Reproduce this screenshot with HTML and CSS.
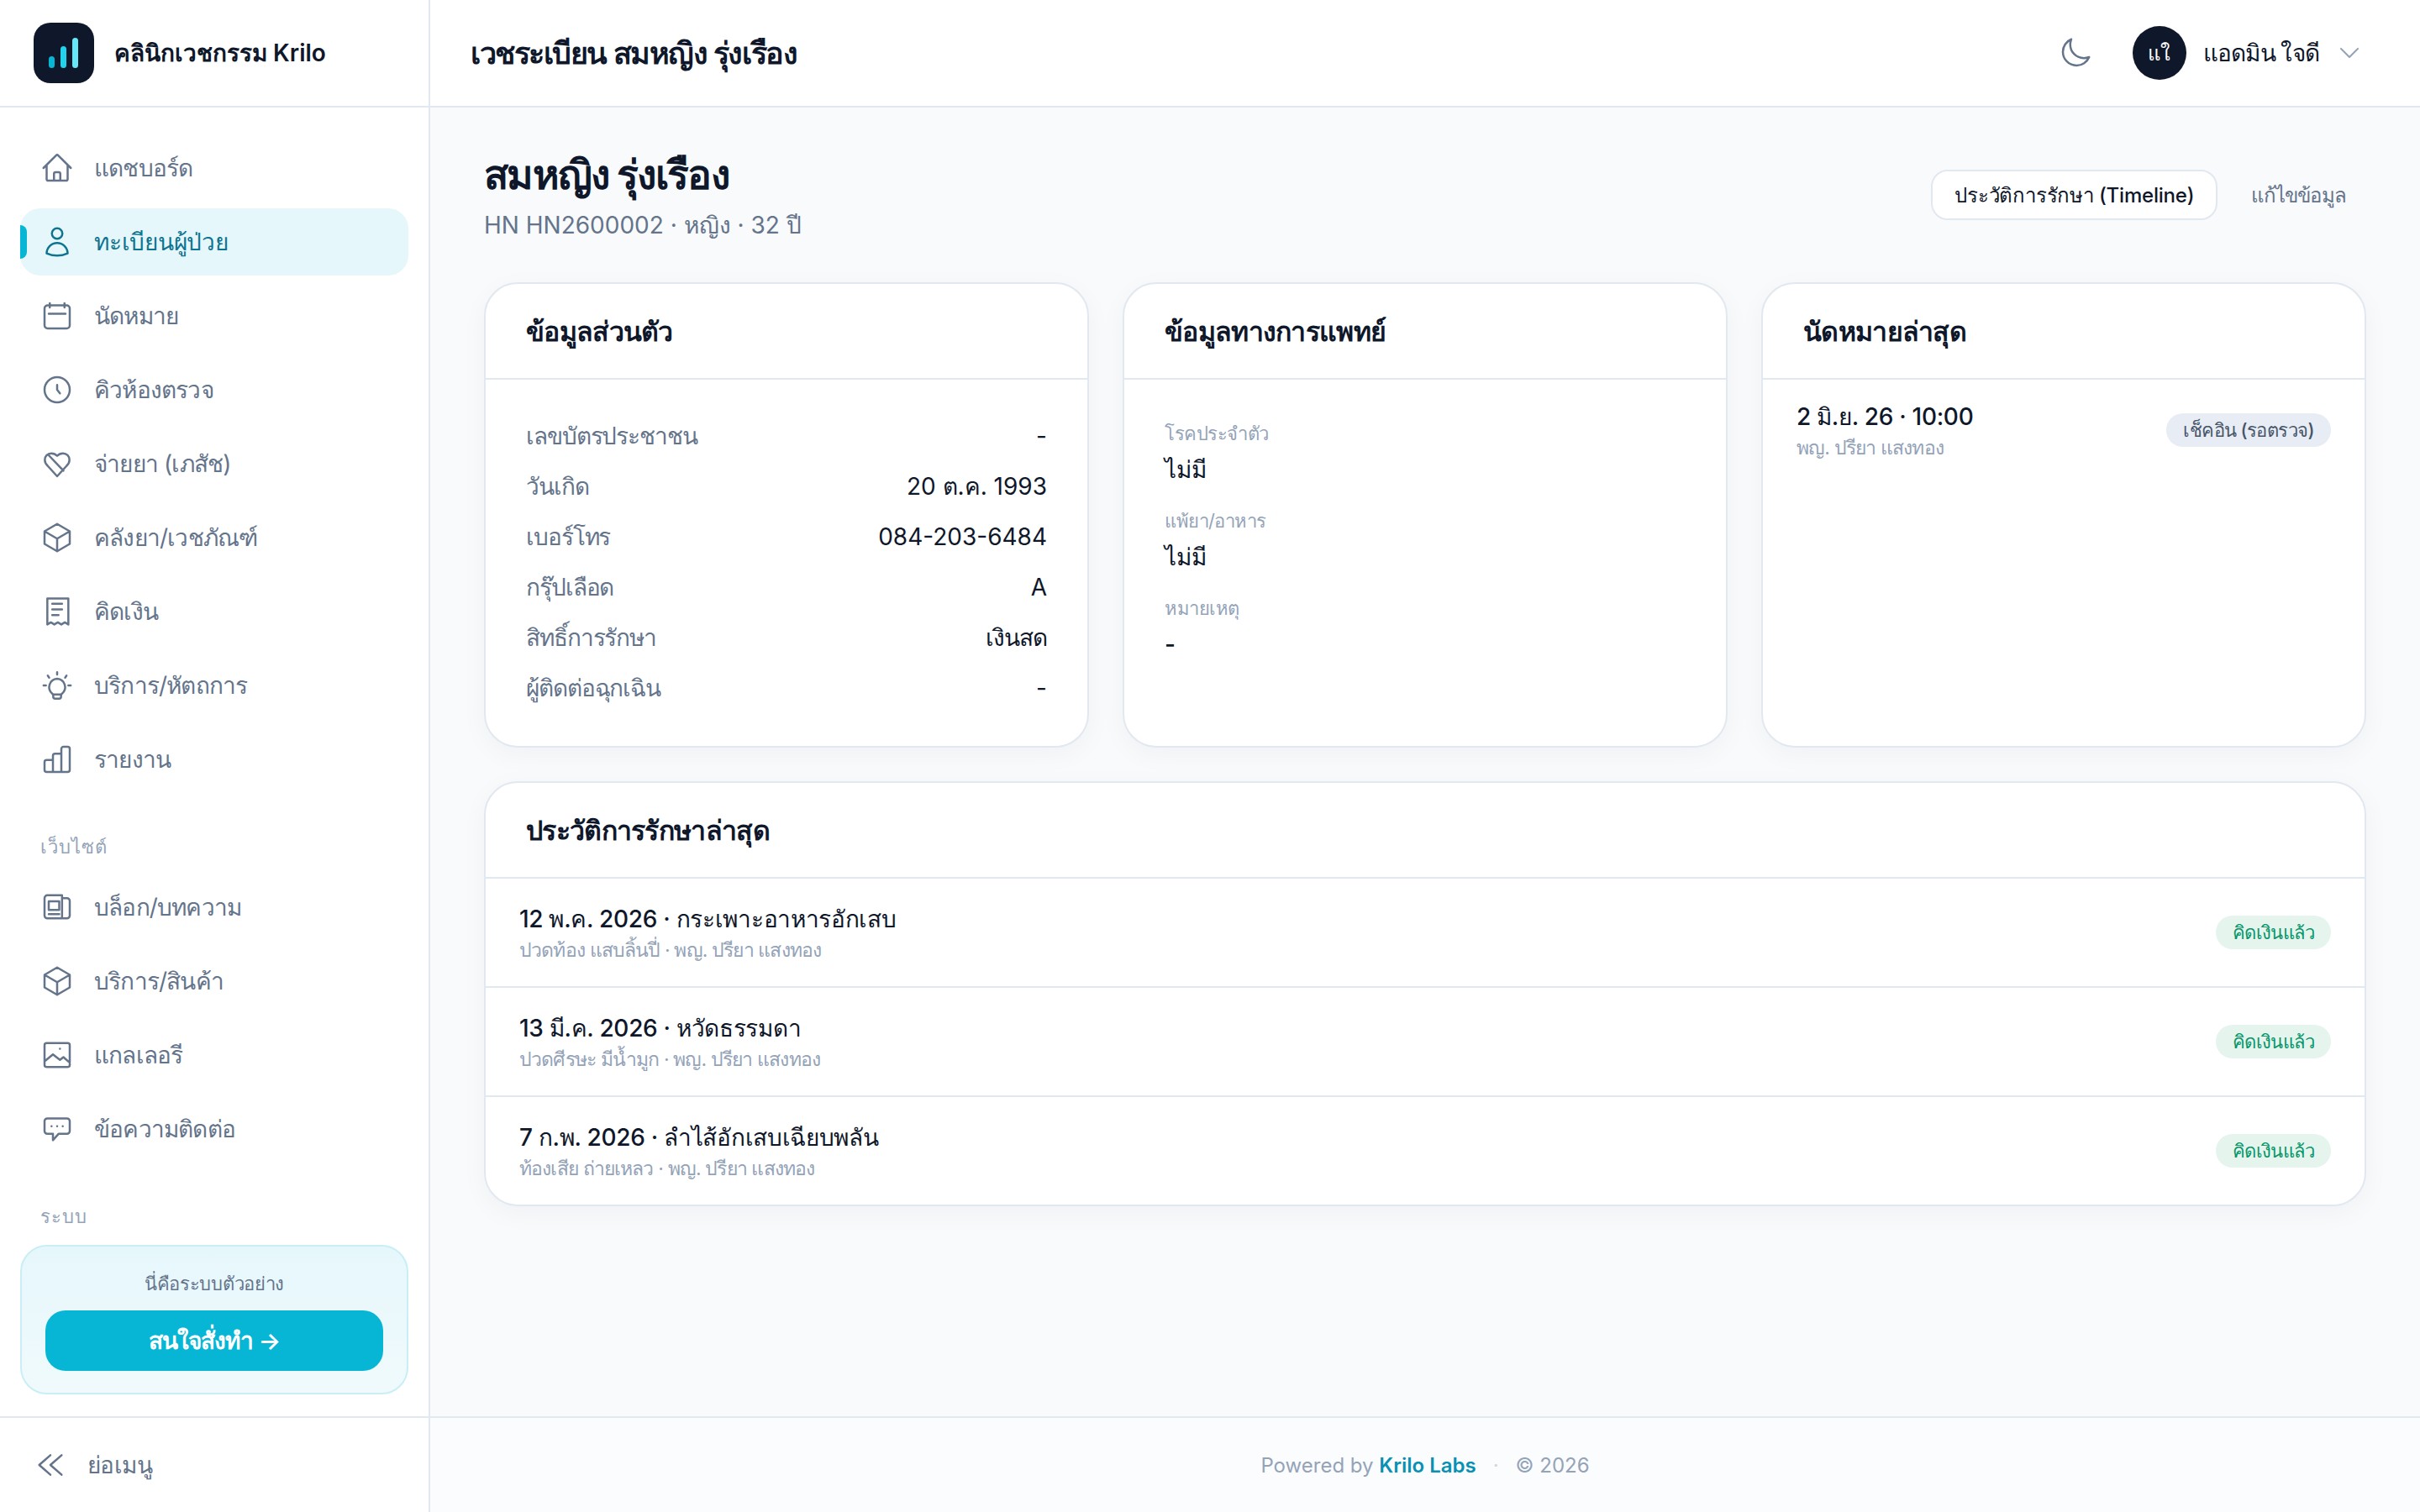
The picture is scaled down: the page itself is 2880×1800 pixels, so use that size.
FILE: index.html
```html
<!DOCTYPE html>
<html lang="th">
<head>
    <meta charset="UTF-8">
    <meta name="viewport" content="width=device-width, initial-scale=1.0">
    <title>เวชระเบียน สมหญิง รุ่งเรือง</title>
    <link rel="stylesheet" href="styles.css">
</head>
<body>
    <div class="app">
        <aside class="sidebar">
            <div class="brand">
                <svg class="brand-logo" viewBox="0 0 72 72">
                    <rect width="72" height="72" rx="20" fill="#0f172a"/>
                    <rect x="18" y="40" width="7" height="14" rx="3.5" fill="#06b6d4"/>
                    <rect x="32" y="28" width="7" height="26" rx="3.5" fill="#22d3ee"/>
                    <rect x="46" y="18" width="7" height="36" rx="3.5" fill="#67e8f9"/>
                </svg>
                <span class="brand-name">คลินิกเวชกรรม Krilo</span>
            </div>
            <nav class="nav">
                <a class="nav-item">
                    <svg class="icon" viewBox="0 0 24 24"><path d="m2.25 12 8.954-8.955c.44-.439 1.152-.439 1.591 0L21.75 12M4.5 9.75v10.125c0 .621.504 1.125 1.125 1.125H9.75v-4.875c0-.621.504-1.125 1.125-1.125h2.25c.621 0 1.125.504 1.125 1.125V21h4.125c.621 0 1.125-.504 1.125-1.125V9.75M8.25 21h8.25"/></svg>
                    แดชบอร์ด
                </a>
                <a class="nav-item active">
                    <svg class="icon" viewBox="0 0 24 24"><path d="M15.75 6a3.75 3.75 0 1 1-7.5 0 3.75 3.75 0 0 1 7.5 0ZM4.501 20.118a7.5 7.5 0 0 1 14.998 0A17.933 17.933 0 0 1 12 21.75c-2.676 0-5.216-.584-7.499-1.632Z"/></svg>
                    ทะเบียนผู้ป่วย
                </a>
                <a class="nav-item">
                    <svg class="icon" viewBox="0 0 24 24"><path d="M6.75 3v3M17.25 3v3M5.25 4.5h13.5A2.25 2.25 0 0 1 21 6.75v12A2.25 2.25 0 0 1 18.75 21H5.25A2.25 2.25 0 0 1 3 18.75v-12A2.25 2.25 0 0 1 5.25 4.5ZM6 10.5h12"/></svg>
                    นัดหมาย
                </a>
                <a class="nav-item">
                    <svg class="icon" viewBox="0 0 24 24"><path d="M12 8.5V12l2 2.5M21 12a9 9 0 1 1-18 0 9 9 0 0 1 18 0Z"/></svg>
                    คิวห้องตรวจ
                </a>
                <a class="nav-item">
                    <svg class="icon" viewBox="0 0 24 24"><path d="M20.8 9.3c0-2.700-2-4.700-4.600-4.700-1.700 0-3.200.7-4.200 1.800-1-1.100-2.500-1.800-4.200-1.800-2.600 0-4.600 2-4.600 4.700 0 1.700.8 3 2 4.200L12 21l6.800-7.500c1.200-1.200 2-2.500 2-4.200ZM6 6l10.500 11"/></svg>
                    จ่ายยา (เภสัช)
                </a>
                <a class="nav-item">
                    <svg class="icon" viewBox="0 0 24 24"><path d="m21 7.5-9-5.250L3 7.500m18 0-9 5.250m9-5.250v9l-9 5.250M3 7.500l9 5.250M3 7.500v9l9 5.250m0-9v9"/></svg>
                    คลังยา/เวชภัณฑ์
                </a>
                <a class="nav-item">
                    <svg class="icon" viewBox="0 0 24 24"><path d="M5 2.750h15v18.500l-2.500-1.500-2.500 1.500-2.500-1.500-2.500 1.500-2.500-1.500-2.500 1.500ZM8.500 6.500h7M8.500 10.500h7M8.500 14.500H13"/></svg>
                    คิดเงิน
                </a>
                <a class="nav-item">
                    <svg class="icon" viewBox="0 0 24 24"><path d="M12 7.200a6 6 0 0 0-3.500 10.600c.5.4.7.9.7 1.400v.7c0 .8.6 1.500 1.400 1.500h2.800c.8 0 1.400-.7 1.400-1.500v-.7c0-.5.2-1 .7-1.400A6 6 0 0 0 12 7.200ZM9.500 18.500h5M12 2.500v1.700M5.300 5l1 1.400M18.700 5l-1 1.400M2.300 12H4M20 12h1.700"/></svg>
                    บริการ/หัตถการ
                </a>
                <a class="nav-item">
                    <svg class="icon" viewBox="0 0 24 24"><path d="M3 14c0-.8.6-1.500 1.500-1.500H9V21H4.500C3.600 21 3 20.400 3 19.500ZM9 9.500C9 8.700 9.600 8 10.500 8H15v13H9ZM15 4.500c0-.8.6-1.500 1.500-1.500h3c.9 0 1.500.7 1.500 1.500v15c0 .8-.6 1.500-1.500 1.500H15Z"/></svg>
                    รายงาน
                </a>

                <div class="nav-label">เว็บไซต์</div>
                <a class="nav-item">
                    <svg class="icon" viewBox="0 0 24 24"><path d="M5 3.500h10.500V20H5a2 2 0 0 1-2-2V5.500a2 2 0 0 1 2-2ZM15.500 5.500H19a2 2 0 0 1 2 2V18a2 2 0 0 1-2 2h-3.500M6 7.800h7.500v6.200H6ZM6 17h7.500"/></svg>
                    บล็อก/บทความ
                </a>
                <a class="nav-item">
                    <svg class="icon" viewBox="0 0 24 24"><path d="m21 7.500-9-5.250L3 7.500m18 0-9 5.250m9-5.250v9l-9 5.250M3 7.500l9 5.250M3 7.500v9l9 5.250m0-9v9"/></svg>
                    บริการ/สินค้า
                </a>
                <a class="nav-item">
                    <svg class="icon" viewBox="0 0 24 24"><path d="M4.500 3.500h15A1.500 1.500 0 0 1 21 5v14a1.500 1.500 0 0 1-1.500 1.500h-15A1.500 1.500 0 0 1 3 19V5a1.500 1.500 0 0 1 1.500-1.500ZM3 16.500l6-5 5 4 2.500-2 4.500 4M14 7.500h.01"/></svg>
                    แกลเลอรี
                </a>
                <a class="nav-item">
                    <svg class="icon" viewBox="0 0 24 24"><path d="M5 4.500h14a2 2 0 0 1 2 2v7a2 2 0 0 1-2 2h-6l-4 4.500v-4.500H5a2 2 0 0 1-2-2v-7a2 2 0 0 1 2-2ZM8 10h.01M12 10h.01M16 10h.01"/></svg>
                    ข้อความติดต่อ
                </a>

                <div class="nav-label">ระบบ</div>
            </nav>
            <div class="promo">
                <p>นี่คือระบบตัวอย่าง</p>
                <a class="promo-btn">สนใจสั่งทำ →</a>
            </div>
            <div class="collapse">
                <svg class="icon" viewBox="0 0 24 24"><path d="M12 5l-8 7 8 7M20 5l-8 7 8 7"/></svg>
                ย่อเมนู
            </div>
        </aside>

        <div class="main">
            <header class="topbar">
                <h1>เวชระเบียน สมหญิง รุ่งเรือง</h1>
                <svg class="icon moon" viewBox="0 0 24 24"><path d="M21.752 15.002A9.72 9.72 0 0 1 18 15.750c-5.385 0-9.750-4.365-9.750-9.750 0-1.330.266-2.597.748-3.752A9.753 9.753 0 0 0 3 11.250C3 16.635 7.365 21 12.750 21a9.753 9.753 0 0 0 9.002-5.998Z"/></svg>
                <div class="avatar">แใ</div>
                <span class="user-name">แอดมิน ใจดี</span>
                <svg class="icon chevron" viewBox="0 0 24 24"><path d="m19.500 8.250-7.500 7.500-7.500-7.500"/></svg>
            </header>

            <main class="content">
                <div class="page-head">
                    <div>
                        <h2>สมหญิง รุ่งเรือง</h2>
                        <p class="page-sub">HN HN2600002 · หญิง · 32 ปี</p>
                    </div>
                    <div class="page-actions">
                        <a class="btn">ประวัติการรักษา (Timeline)</a>
                        <a class="btn-ghost">แก้ไขข้อมูล</a>
                    </div>
                </div>

                <div class="card-grid">
                    <section class="card">
                        <h3 class="card-title">ข้อมูลส่วนตัว</h3>
                        <dl class="info">
                            <div><dt>เลขบัตรประชาชน</dt><dd>-</dd></div>
                            <div><dt>วันเกิด</dt><dd>20 ต.ค. 1993</dd></div>
                            <div><dt>เบอร์โทร</dt><dd>084-203-6484</dd></div>
                            <div><dt>กรุ๊ปเลือด</dt><dd>A</dd></div>
                            <div><dt>สิทธิ์การรักษา</dt><dd class="thai-value">เงินสด</dd></div>
                            <div><dt>ผู้ติดต่อฉุกเฉิน</dt><dd>-</dd></div>
                        </dl>
                    </section>
                    <section class="card">
                        <h3 class="card-title">ข้อมูลทางการแพทย์</h3>
                        <div class="medical">
                            <div><div class="med-label">โรคประจำตัว</div><div class="med-value">ไม่มี</div></div>
                            <div><div class="med-label">แพ้ยา/อาหาร</div><div class="med-value">ไม่มี</div></div>
                            <div><div class="med-label">หมายเหตุ</div><div class="med-value">-</div></div>
                        </div>
                    </section>
                    <section class="card">
                        <h3 class="card-title">นัดหมายล่าสุด</h3>
                        <div class="row appt">
                            <div>
                                <div class="row-title">2 มิ.ย. 26 · 10:00</div>
                                <div class="row-sub">พญ. ปรียา แสงทอง</div>
                            </div>
                            <span class="badge badge-gray">เช็คอิน (รอตรวจ)</span>
                        </div>
                    </section>
                </div>

                <section class="card history">
                    <h3 class="card-title">ประวัติการรักษาล่าสุด</h3>
                    <div class="row">
                        <div>
                            <div class="row-title">12 พ.ค. 2026 · กระเพาะอาหารอักเสบ</div>
                            <div class="row-sub">ปวดท้อง แสบลิ้นปี่ · พญ. ปรียา แสงทอง</div>
                        </div>
                        <span class="badge badge-green">คิดเงินแล้ว</span>
                    </div>
                    <div class="row">
                        <div>
                            <div class="row-title">13 มี.ค. 2026 · หวัดธรรมดา</div>
                            <div class="row-sub">ปวดศีรษะ มีน้ำมูก · พญ. ปรียา แสงทอง</div>
                        </div>
                        <span class="badge badge-green">คิดเงินแล้ว</span>
                    </div>
                    <div class="row">
                        <div>
                            <div class="row-title">7 ก.พ. 2026 · ลำไส้อักเสบเฉียบพลัน</div>
                            <div class="row-sub">ท้องเสีย ถ่ายเหลว · พญ. ปรียา แสงทอง</div>
                        </div>
                        <span class="badge badge-green">คิดเงินแล้ว</span>
                    </div>
                </section>
            </main>

            <footer class="footer">
                <span>Powered by <a>Krilo Labs</a></span>
                <span class="dot">·</span>
                <span>© 2026</span>
            </footer>
        </div>
    </div>
</body>
</html>
```

FILE: styles.css
```css
* { box-sizing: border-box; }
html, body { margin: 0; height: 100%; }
body { font-family: Inter, "Noto Sans", sans-serif; font-size: 28px; color: #0f172a; background: #f8fafc; }
h1, h2, h3, p, dl, dd { margin: 0; }

.app { display: flex; height: 1800px; overflow: hidden; }
.icon { width: 40px; height: 40px; flex: none; fill: none; stroke: currentColor; stroke-width: 1.5; stroke-linecap: round; stroke-linejoin: round; }

/* sidebar */
.sidebar { width: 512px; flex: none; display: flex; flex-direction: column; background: #fff; border-right: 2px solid #e2e8f0; }
.brand { height: 128px; flex: none; display: flex; align-items: center; gap: 24px; padding-left: 40px; border-bottom: 2px solid #e2e8f0; }
.brand-logo { width: 72px; height: 72px; }
.brand-name { font-size: 28px; font-weight: 600; }
.nav { flex: 1; min-height: 0; padding: 32px 24px 0; display: flex; flex-direction: column; gap: 8px; }
.nav-item { position: relative; height: 80px; flex: none; display: flex; align-items: center; gap: 24px; padding-left: 24px; border-radius: 24px; color: #64748b; font-size: 28px; letter-spacing: -.8px; }
.nav-item.active { background: #e6f7fc; color: #0e7490; font-weight: 500; letter-spacing: -.25px; }
.nav-item.active::before { content: ""; position: absolute; left: 0; top: 20px; width: 8px; height: 40px; background: #06b6d4; border-radius: 0 8px 8px 0; }
.nav-label { height: 32px; line-height: 32px; margin: 40px 0 8px; padding-left: 24px; font-size: 22px; letter-spacing: 1px; color: #94a3b8; }
.promo { flex: none; margin: 0 24px 26px; height: 178px; padding: 26px 28px 0; text-align: center; border: 2px solid #c9eef6; border-radius: 32px; background: linear-gradient(#e6f7fc, #f0fafc); }
.promo p { font-size: 22px; line-height: 36px; letter-spacing: -.3px; color: #64748b; margin-bottom: 14px; }
.promo-btn { display: flex; align-items: center; justify-content: center; height: 72px; border-radius: 24px; background: #06b6d4; color: #fff; font-size: 28px; letter-spacing: -.9px; font-weight: 600; }
.collapse { height: 114px; flex: none; display: flex; align-items: center; gap: 24px; padding-left: 40px; border-top: 2px solid #e2e8f0; color: #64748b; font-size: 28px; letter-spacing: -.6px; }

/* main */
.main { flex: 1; min-width: 0; display: flex; flex-direction: column; }
.topbar { height: 128px; flex: none; display: flex; align-items: center; padding: 0 68px 0 48px; background: #fff; border-bottom: 2px solid #e2e8f0; }
.topbar h1 { font-size: 36px; letter-spacing: -1.45px; font-weight: 600; margin-right: auto; }
.moon { color: #64748b; margin-right: 48px; }
.avatar { width: 64px; height: 64px; border-radius: 50%; background: #0f172a; color: #fff; font-size: 24px; font-weight: 500; display: flex; align-items: center; justify-content: center; margin-right: 20px; }
.user-name { font-size: 28px; letter-spacing: -.8px; font-weight: 500; margin-right: 20px; }
.chevron { width: 32px; height: 32px; color: #94a3b8; }

.content { flex: 1; min-height: 0; padding: 48px 64px 0; }
.page-head { height: 112px; display: flex; align-items: flex-start; justify-content: space-between; margin-bottom: 48px; }
.page-head h2 { font-size: 48px; letter-spacing: -1.7px; line-height: 64px; font-weight: 700; }
.page-sub { margin-top: 4px; font-size: 28px; line-height: 48px; color: #64748b; }
.page-actions { align-self: center; display: flex; align-items: center; gap: 16px; }
.btn { height: 60px; display: flex; align-items: center; padding: 0 26px; background: #fff; border: 2px solid #e2e8f0; border-radius: 20px; font-size: 24px; letter-spacing: -.2px; font-weight: 500; }
.btn-ghost { padding: 0 24px; font-size: 24px; letter-spacing: -.8px; font-weight: 500; color: #64748b; }

.card { background: #fff; border: 2px solid #e2e8f0; border-radius: 40px; box-shadow: 0 8px 32px rgba(15, 23, 42, .04); overflow: hidden; }
.card-grid { display: grid; grid-template-columns: repeat(3, 1fr); gap: 40px; height: 554px; }
.card-title { height: 114px; display: flex; align-items: center; padding-left: 48px; font-size: 32px; letter-spacing: -.7px; font-weight: 600; border-bottom: 2px solid #e2e8f0; }
.info { padding: 37px 48px 0; }
.info > div { height: 60px; display: flex; align-items: center; justify-content: space-between; }
.info dt { color: #64748b; letter-spacing: -1.1px; }
.thai-value { letter-spacing: -1px; }
.medical { padding: 46px 48px 0; display: flex; flex-direction: column; gap: 25px; }
.med-label { font-size: 22px; letter-spacing: -.5px; line-height: 36px; color: #94a3b8; margin-bottom: 7px; }
.med-value { font-size: 28px; line-height: 36px; font-weight: 500; }

.history { margin-top: 40px; }
.row { height: 130px; display: flex; align-items: center; justify-content: space-between; padding: 0 40px; border-bottom: 2px solid #e2e8f0; }
.row:last-child { border-bottom: 0; height: 128px; }
.row.appt { height: 120px; }
.row-title { font-size: 28px; letter-spacing: -.3px; line-height: 40px; margin-bottom: 2px; font-weight: 500; }
.row-sub { font-size: 23px; letter-spacing: -.85px; line-height: 30px; color: #94a3b8; }
.badge { height: 40px; display: flex; align-items: center; padding: 0 20px; border-radius: 20px; font-size: 22px; letter-spacing: -.6px; font-weight: 500; }
.badge-gray { background: #e8edf5; color: #475569; }
.badge-green { background: #e6f4ee; color: #059669; }

.footer { height: 114px; flex: none; display: flex; align-items: center; justify-content: center; gap: 20px; border-top: 2px solid #e2e8f0; background: #fbfcfe; color: #94a3b8; font-size: 24px; }
.footer a { color: #0891b2; font-weight: 600; }
.footer .dot { color: #cbd5e1; }
```
